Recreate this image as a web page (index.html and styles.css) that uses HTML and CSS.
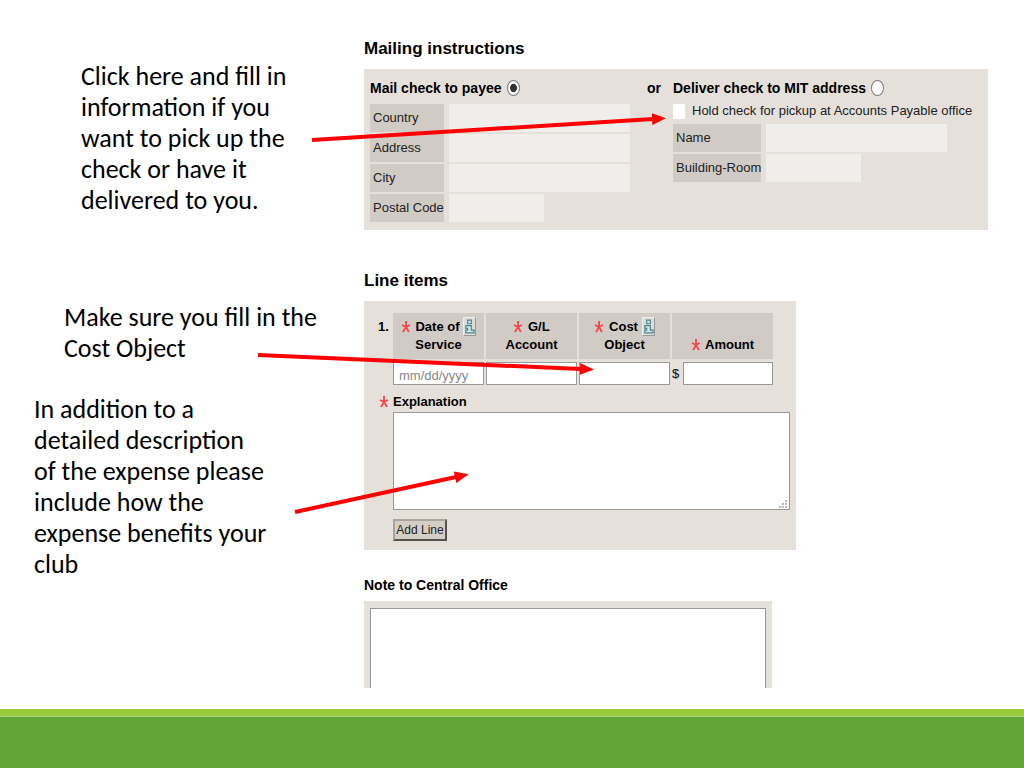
FILE: index.html
```
<!DOCTYPE html>
<html lang="en">
<head>
	<meta charset="UTF-8">
	<title>Mailing instructions</title>
	<link rel="stylesheet" href="styles.css">
</head>
<body>
	<svg class="symbols" width="0" height="0" aria-hidden="true">
		<symbol id="star" viewBox="0 0 10 14">
			<path d="M5 1V7M1 5L5 7L9 5M2 12L5 7L8 12" fill="none" stroke="#f8444a" stroke-width="1.8"/>
		</symbol>
		<symbol id="info" viewBox="0 0 12 18">
			<path d="M4 2H8V6H4ZM2 8H8V13H11V16H2V13H4V11H2Z" fill="#d5e6e8" stroke="#4b8792" stroke-width="1.3"/>
		</symbol>
	</svg>
	<main class="slide">
		<div class="notes">
			<p class="note-mail">Click here and fill in<br>information if you<br>want to pick up the<br>check or have it<br>delivered to you.</p>
			<p class="note-cost">Make sure you fill in the<br>Cost Object</p>
			<p class="note-desc">In addition to a<br>detailed description<br>of the expense please<br>include how the<br>expense benefits your<br>club</p>
		</div>
		<form class="form">
			<h2>Mailing instructions</h2>
			<section class="panel mailing">
				<div class="payee">
					<div class="choice"><label for="payee">Mail check to payee</label><input type="radio" name="mail" id="payee" checked></div>
					<div class="fields">
						<label for="country">Country</label><input type="text" id="country" disabled>
						<label for="address">Address</label><input type="text" id="address" disabled>
						<label for="city">City</label><input type="text" id="city" disabled>
						<label for="postal">Postal Code</label><input class="short" type="text" id="postal" disabled>
					</div>
				</div>
				<div class="or">or</div>
				<div class="deliver">
					<div class="choice"><label for="mit">Deliver check to MIT address</label><input type="radio" name="mail" id="mit"></div>
					<div class="hold"><input type="checkbox" id="hold"><label for="hold">Hold check for pickup at Accounts Payable office</label></div>
					<div class="fields">
						<label for="name">Name</label><input type="text" id="name" disabled>
						<label for="room">Building-Room</label><input class="short" type="text" id="room" disabled>
					</div>
				</div>
			</section>

			<h2>Line items</h2>
			<section class="panel items">
				<table>
					<tr>
						<td class="num">1.</td>
						<th><svg class="star"><use href="#star"/></svg> <label for="date">Date of</label> <button type="button" class="info" aria-label="Date help"><svg><use href="#info"/></svg></button><br>Service</th>
						<th><svg class="star"><use href="#star"/></svg> <label for="gl">G/L<br>Account</label></th>
						<th><svg class="star"><use href="#star"/></svg> <label for="cost">Cost</label> <button type="button" class="info" aria-label="Cost object help"><svg><use href="#info"/></svg></button><br>Object</th>
						<th class="amount"><svg class="star"><use href="#star"/></svg> <label for="amount">Amount</label></th>
					</tr>
					<tr>
						<td></td>
						<td><input type="text" id="date" placeholder="mm/dd/yyyy"></td>
						<td><input type="text" id="gl"></td>
						<td><input type="text" id="cost"></td>
						<td><div class="money"><span>$</span><input type="text" id="amount"></div></td>
					</tr>
				</table>
				<div class="expl-label"><svg class="star"><use href="#star"/></svg><label for="expl">Explanation</label></div>
				<div class="expl">
					<textarea id="expl"></textarea>
					<svg class="grip" width="8" height="8"><path d="M6 0h2v2H6zM3 3h2v2H3zM6 3h2v2H6zM0 6h2v2H0zM3 6h2v2H3zM6 6h2v2H6z" fill="#bbb"/></svg>
				</div>
				<button type="button" class="add">Add Line</button>
			</section>

			<h3><label for="central">Note to Central Office</label></h3>
			<section class="panel central">
				<textarea id="central"></textarea>
			</section>
		</form>

		<!-- arrows from the notes to the form -->
		<svg class="arrows" width="700" height="540" aria-hidden="true">
			<defs>
				<marker id="head" markerUnits="userSpaceOnUse" markerWidth="14" markerHeight="14" refX="1" refY="7" orient="auto">
					<path d="M0 1L14 7L0 13Z" fill="#fe0000"/>
				</marker>
			</defs>
			<g stroke="#fe0000" stroke-width="4" marker-end="url(#head)">
				<path d="M312 140L653 119"/>
				<path d="M258 355L581 369"/>
				<path d="M295 512L456 477"/>
			</g>
		</svg>
	</main>
	<footer class="bar"></footer>
</body>
</html>
```
FILE: styles.css
```
*{box-sizing:border-box; padding:0; margin:0;}
body{min-height:100vh; display:flex; flex-direction:column; background:#fff; color:#000; font-family:"Liberation Sans",Arial,sans-serif; font-size:13px; line-height:18px;}
input, textarea, button{font:inherit; color:inherit;}
.symbols{position:absolute;}

.slide{flex:1; display:flex; position:relative; padding-right:36px;}
.arrows{position:absolute; left:0; top:0; pointer-events:none;}

/* notes */
.notes{width:364px; flex:none; padding:61px 0 0 34px; font-family:Carlito,Calibri,Lato,sans-serif; font-size:26px; line-height:31px;}
.note-mail{padding-left:47px; margin-bottom:86px;}
.note-cost{padding-left:30px; margin-bottom:30px;}

.form{flex:1; min-width:0; padding-top:37px;}
h2{font-size:17px; line-height:24px; margin-bottom:8px;}
h3{font-size:14px; line-height:20px; margin-bottom:6px;}
.panel{background:#e5e0da;}

/* mailing */
.mailing{display:flex; padding:9px 6px 8px; margin-bottom:39px;}
.payee{width:277px; flex:none;}
.or{width:26px; flex:none; font-size:14px; line-height:20px; font-weight:bold;}
.choice{display:flex; align-items:center; gap:5px; height:20px; font-size:14px; font-weight:bold;}
.choice input{appearance:none; width:13px; height:16px; border:1px solid #777; border-radius:50%; background:#fff;}
.choice input:checked{background:radial-gradient(closest-side,#333 0 56%,#fff 66%);}
.payee .fields{grid-template-columns:74px 1fr; margin-top:6px;}
.fields{display:grid; grid-template-columns:88px 1fr; gap:2px 5px;}
.fields label{padding-left:3px; line-height:28px; background:#d1cbc5; color:#222; white-space:nowrap;}
.fields input{width:181px; height:28px; border:0; background:#f0eeeb;}
.fields .short{width:95px;}
.hold{display:flex; align-items:center; gap:7px; height:26px; color:#222;}
.hold input{appearance:none; width:12px; height:15px; background:#fff;}

/* line items */
.items{width:432px; padding:10px 6px 9px 12px; margin-bottom:25px;}
table{table-layout:fixed; width:399px; border-spacing:2px;}
th{width:91px; height:46px; background:#d1cbc5; vertical-align:top; padding-top:5px;}
th .star{margin-right:1px;}
.amount{width:101px; vertical-align:bottom; padding-bottom:5px;}
td{padding:1px 0;}
.num{width:13px; padding:5px 0; font-weight:bold; vertical-align:top;}
.items input{display:block; width:100%; height:23px; padding:3px 5px 0; border:1px solid #999; background:#fff;}
.items input::placeholder{color:#888;}
.money{display:flex; align-items:center;}
.money span{width:11px; flex:none;}
.star{width:10px; height:14px; vertical-align:-3px;}
.info{width:13px; height:19px; border:1px solid; border-color:#eee #999 #999 #eee; background:#dcdcd8; vertical-align:middle; margin:-4px 0 -2px;}
.info svg{display:block; width:11px; height:17px;}
.expl-label{display:flex; align-items:center; gap:4px; padding:5px 0 1px 3px; font-weight:bold;}
.expl{position:relative; margin-left:17px;}
textarea{display:block; width:100%; border:1px solid #999; background:#fff; resize:none;}
.expl textarea{height:98px;}
.grip{position:absolute; right:3px; bottom:2px;}
.add{display:block; width:54px; height:22px; margin:9px 0 0 17px; border:2px outset #aaa59c; background:#d4cec6; font-size:12px; line-height:18px; color:#222; white-space:nowrap;}

.central{width:408px; padding:7px 6px 0;}
.central textarea{height:80px; border-bottom:0;}

.bar{height:59px; border-top:7px solid #99cb3c; background:#63a537; box-shadow:inset 0 1px #a8d57c;}
```
